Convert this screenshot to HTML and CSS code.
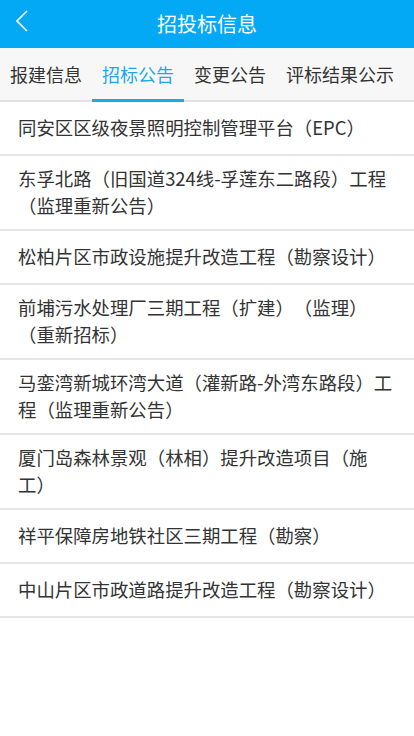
FILE: index.html
```html
<!DOCTYPE html>
<html lang="zh-CN">
<head>
  <meta charset="UTF-8" />
  <meta name="viewport" content="width=device-width, initial-scale=1.0"/>
  <title>招投标信息</title>
  <link rel="stylesheet" href="styles.css">
</head>
<body>

  <header class="topbar">
    <a class="back" href="#">
      <svg width="20" height="24" viewBox="0 0 20 24">
        <path d="M11 1 L1 11 L11 21" fill="none" stroke="#fff" stroke-width="1.6"/>
      </svg>
    </a>
    <h1>招投标信息</h1>
  </header>

  <nav class="tabs">
    <div class="tab">报建信息</div>
    <div class="tab active">招标公告</div>
    <div class="tab">变更公告</div>
    <div class="tab">评标结果公示</div>
  </nav>

  <ul class="list">
    <li>同安区区级夜景照明控制管理平台（EPC）</li>
    <li>东孚北路（旧国道324线-孚莲东二路段）工程（监理重新公告）</li>
    <li>松柏片区市政设施提升改造工程（勘察设计）</li>
    <li>前埔污水处理厂三期工程（扩建）（监理）（重新招标）</li>
    <li>马銮湾新城环湾大道（灌新路-外湾东路段）工程（监理重新公告）</li>
    <li>厦门岛森林景观（林相）提升改造项目（施工）</li>
    <li>祥平保障房地铁社区三期工程（勘察）</li>
    <li>中山片区市政道路提升改造工程（勘察设计）</li>
  </ul>

</body>
</html>
```

FILE: styles.css
```css
* { box-sizing: border-box; }
body {
  margin: 0; padding: 0;
  background: #fff;
  color: #333;
  font-family: "Noto Sans CJK SC", sans-serif;
  text-spacing-trim: space-all;
  width: 414px; min-height: 736px;
}
.topbar {
  height: 48px;
  background: #03a9f4;
  display: flex; align-items: center; justify-content: center;
  position: relative;
}
.back {
  position: absolute; left: 16px; top: 10px;
  display: block; width: 20px; height: 24px;
}
.topbar h1 {
  margin: 0;
  font-size: 20px; font-weight: normal;
  color: #fff; line-height: 1;
}
.tabs {
  height: 54px;
  background: #f7f7f7;
  border-bottom: 2px solid #e2e2e2;
  display: flex;
}
.tab {
  padding: 0 10px;
  font-size: 18px; color: #333;
  display: flex; align-items: center;
  white-space: nowrap;
  position: relative;
}
.tab.active { color: #1ea7ef; }
.tab.active::after {
  content: "";
  position: absolute; left: 0; right: 0; bottom: -2px;
  height: 3px; background: #1ea7ef;
}
.list {
  list-style: none; margin: 0; padding: 0;
}
.list li {
  min-height: 54px;
  padding: 9px 18px 10px;
  font-size: 18.4px; line-height: 27px;
  color: #333;
  border-bottom: 2px solid #e6e6e6;
  display: flex; align-items: center;
}
```
